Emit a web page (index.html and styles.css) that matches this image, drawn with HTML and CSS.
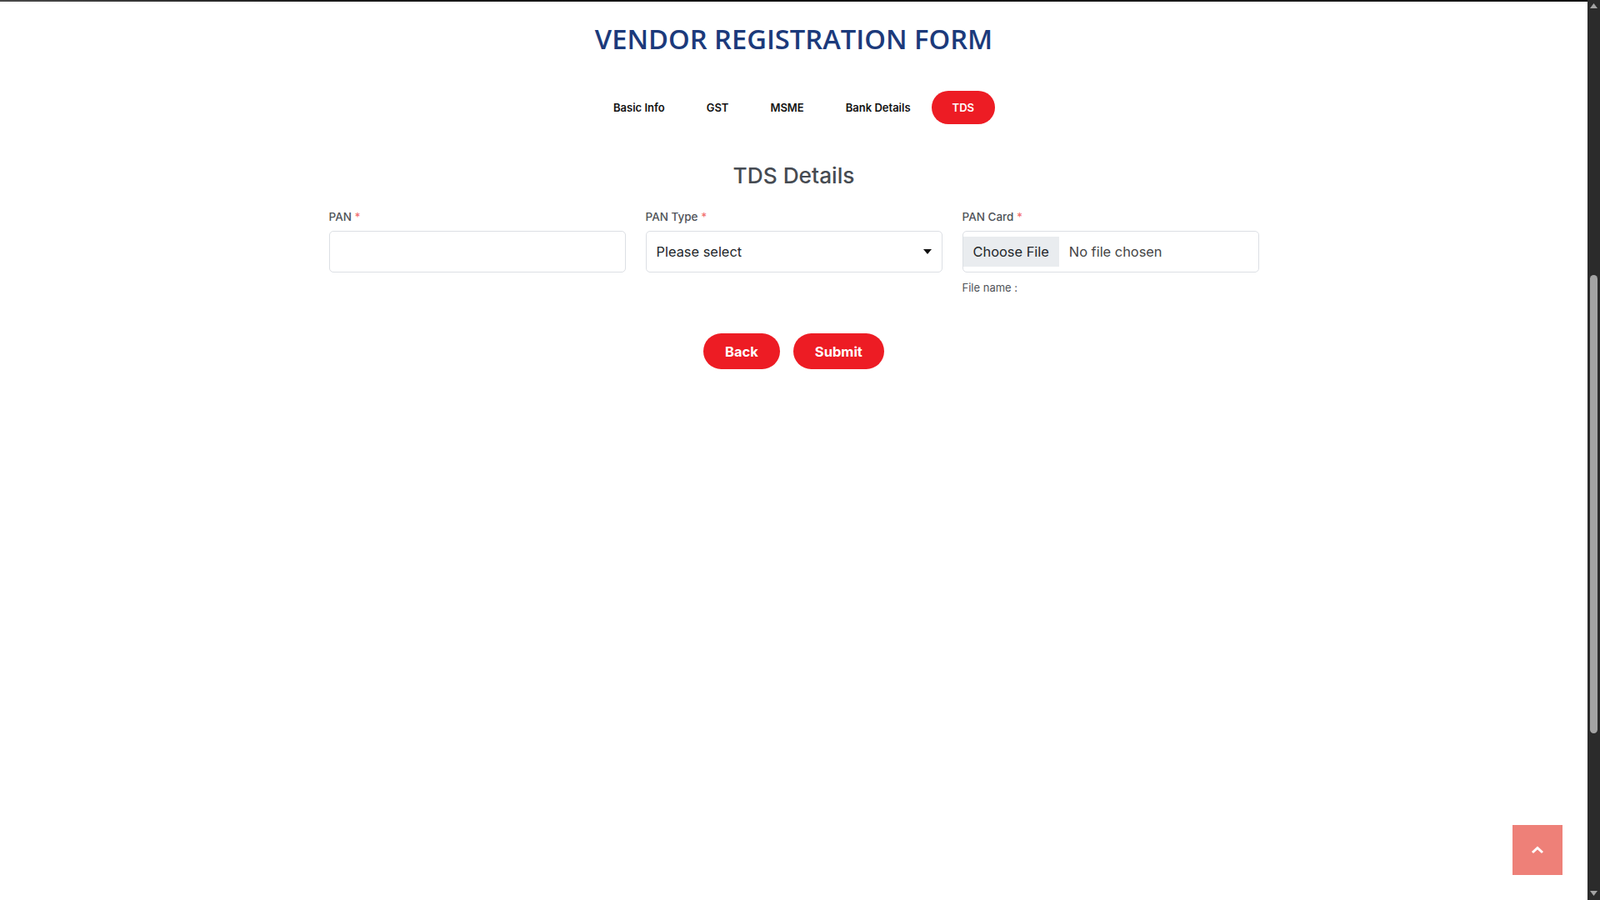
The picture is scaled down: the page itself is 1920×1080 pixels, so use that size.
FILE: index.html
```html
<!DOCTYPE html>
<html lang="en">
<head>
<meta charset="utf-8">
<title>Vendor Registration Form</title>
<link rel="stylesheet" href="styles.css">
</head>
<body>
<header class="banner"></header>
<main class="page">
  <h1 class="page-title">VENDOR REGISTRATION FORM</h1>
  <nav class="tabs">
    <a class="tab" href="#">Basic Info</a>
    <a class="tab" href="#">GST</a>
    <a class="tab" href="#">MSME</a>
    <a class="tab" href="#">Bank Details</a>
    <a class="tab tab-active" href="#">TDS</a>
  </nav>
  <section class="container">
    <h2 class="section-title">TDS Details</h2>
    <div class="form-row">
      <div class="field">
        <label class="field-label" for="pan">PAN <span class="req">*</span></label>
        <input class="control" id="pan" type="text">
      </div>
      <div class="field">
        <label class="field-label" for="pantype">PAN Type <span class="req">*</span></label>
        <div class="select-wrap">
          <select class="control select" id="pantype">
            <option>Please select</option>
          </select>
          <svg class="caret" width="10" height="6" viewBox="0 0 10 6"><path d="M0 0H10L5 6Z" fill="#111"/></svg>
        </div>
      </div>
      <div class="field">
        <label class="field-label" for="pancard">PAN Card <span class="req">*</span></label>
        <input class="control file" id="pancard" type="file">
        <div class="file-name">File name :</div>
      </div>
    </div>
    <div class="actions">
      <button class="btn" type="button">Back</button>
      <button class="btn" type="button">Submit</button>
    </div>
  </section>
</main>
<a class="to-top" href="#" aria-label="Back to top">
  <svg width="16" height="10" viewBox="0 0 16 10"><path d="M2 8L8 2.5L14 8" fill="none" stroke="#fff" stroke-width="3"/></svg>
</a>
<div class="scrollbar" aria-hidden="true">
  <svg class="sb-arrow sb-up" width="9" height="6" viewBox="0 0 9 6"><path d="M0 6L4.5 0L9 6Z" fill="#a3a3a3"/></svg>
  <div class="sb-track"><div class="sb-thumb"></div></div>
  <svg class="sb-arrow sb-down" width="9" height="6" viewBox="0 0 9 6"><path d="M0 0H9L4.5 6Z" fill="#a3a3a3"/></svg>
</div>
</body>
</html>
```
FILE: styles.css
```css
html {
  background: #fff;
}
body {
  margin: 0 15px 0 0;
  background: #fff;
  font-family: Inter, "Open Sans", sans-serif;
  color: #212529;
}
.banner {
  height: 2px;
  background: linear-gradient(90deg, #4a4a4a 0%, #1a1a1a 20%, #111 50%, #1b1b1b 80%, #121212 100%);
}
.page-title {
  margin: 26px 0 0;
  text-align: center;
  font-family: "Open Sans", sans-serif;
  font-weight: 600;
  font-size: 32.7px;
  line-height: 38px;
  color: #1c3a7b;
}
.tabs {
  display: flex;
  justify-content: center;
  margin-top: 43px;
}
.tab {
  display: block;
  padding: 10px 25px;
  line-height: 20px;
  font-size: 13px;
  font-weight: 600;
  color: #111;
  text-decoration: none;
  border-radius: 30px;
}
.tab-active {
  background: #ed1c24;
  color: #fff;
}
.container {
  max-width: 1140px;
  margin: 0 auto;
  padding: 0 12px;
  box-sizing: border-box;
}
.section-title {
  margin: 47px 0 0;
  text-align: center;
  font-size: 26.3px;
  line-height: 30px;
  font-weight: 500;
  color: #464b52;
}
.form-row {
  display: grid;
  grid-template-columns: repeat(3, 1fr);
  column-gap: 24px;
  margin-top: 25px;
}
.field-label {
  display: block;
  font-size: 13.5px;
  line-height: 18px;
  font-weight: 500;
  color: #4f5359;
  margin-bottom: 8px;
}
.req {
  color: #f26d6d;
}
.control {
  display: block;
  width: 100%;
  height: 50px;
  box-sizing: border-box;
  border: 1px solid #dcdfe4;
  border-radius: 5px;
  background: #fff;
  font-family: Inter, sans-serif;
  font-size: 16.4px;
  color: #212529;
  padding: 0 12px;
  outline: none;
}
.select-wrap {
  position: relative;
}
.select {
  appearance: none;
  -webkit-appearance: none;
}
.caret {
  position: absolute;
  right: 13px;
  top: 22px;
  pointer-events: none;
}
.file {
  padding: 6px 0;
  color: #444;
}
.file::file-selector-button {
  height: 36px;
  margin: 0 12px 0 0;
  padding: 0 12px;
  border: none;
  border-radius: 0;
  background: #e9ecef;
  font-family: Inter, sans-serif;
  font-size: 16.4px;
  color: #212529;
}
.file-name {
  margin-top: 9px;
  font-size: 13px;
  line-height: 18px;
  color: #4f5359;
}
.actions {
  display: flex;
  justify-content: center;
  gap: 16px;
  margin-top: 46px;
}
.btn {
  height: 43px;
  padding: 0 26px;
  border: none;
  border-radius: 30px;
  background: #ed1c24;
  color: #fff;
  font-family: Inter, sans-serif;
  font-size: 16.5px;
  font-weight: 700;
  cursor: pointer;
}
.to-top {
  position: fixed;
  right: 45px;
  bottom: 30px;
  width: 60px;
  height: 60px;
  background: #ee8078;
  display: flex;
  align-items: center;
  justify-content: center;
}
.scrollbar {
  position: fixed;
  top: 0;
  right: 0;
  bottom: 0;
  width: 15px;
  background: #2b2b2b;
  display: flex;
  flex-direction: column;
  align-items: center;
}
.sb-arrow {
  flex: none;
  margin: 4px 0 5px;
}
.sb-track {
  flex: 1;
  width: 9px;
  padding-top: 315px;
  box-sizing: border-box;
}
.sb-thumb {
  height: 550px;
  background: #a3a3a3;
  border-radius: 5px;
}
```
